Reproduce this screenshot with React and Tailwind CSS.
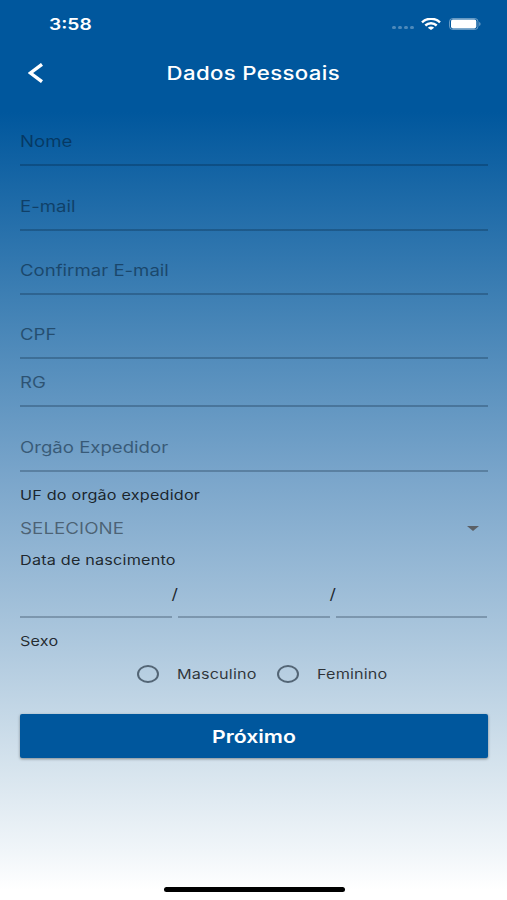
import React from "react";

function Label({ children, className = "" }) {
  return (
    <span className={`inline-block origin-left scale-x-[1.2] whitespace-nowrap ${className}`}>
      {children}
    </span>
  );
}

const lineStyle = "h-[2px] bg-[#001428]/25";

function Field({ label, className = "h-[64.3px]" }) {
  return (
    <div className={`flex flex-col justify-end ${className}`}>
      <Label className="mb-[12px] text-[15.5px] leading-5 text-[#001428]/50">{label}</Label>
      <div className={lineStyle} />
    </div>
  );
}

function StatusBar() {
  return (
    <div className="flex h-[47px] items-center justify-between pl-[49px] pr-[26px] text-white">
      <Label className="text-[16px] font-semibold leading-5">3:58</Label>
      <div className="flex items-center">
        <div className="mr-[7px] mt-[8px] flex gap-[2px]">
          {[0, 1, 2, 3].map((dot) => (
            <span key={dot} className="h-[3px] w-1 rounded-full bg-white/30" />
          ))}
        </div>
        <svg className="mr-2 h-3 w-5" viewBox="0 0 20 12" preserveAspectRatio="none" fill="none" stroke="white">
          <path d="M1 4.3C6-.4 14-.4 19 4.3" strokeWidth="2.4" />
          <path d="M4.3 7.5C7.5 4.5 12.5 4.5 15.7 7.5" strokeWidth="2.4" />
          <path d="M10 12 6.8 9.7C8.6 8.1 11.4 8.1 13.2 9.7Z" fill="white" stroke="none" />
        </svg>
        <svg className="h-3 w-8" viewBox="0 0 32 12" fill="none">
          <rect x=".5" y=".5" width="28.5" height="11" rx="3.2" stroke="white" strokeOpacity=".4" />
          <rect x="2" y="1.6" width="25.3" height="8.8" rx="1.8" fill="white" />
          <path d="M30.3 4v4c1.6-.7 1.6-3.3 0-4Z" fill="white" fillOpacity=".5" />
        </svg>
      </div>
    </div>
  );
}

function Radio({ label, width }) {
  return (
    <div className={`flex items-center ${width}`}>
      <span className="mr-[18px] h-[18px] w-[22px] shrink-0 rounded-[50%] border-2 border-[#536575]" />
      <Label className="text-[13.5px] leading-5 tracking-[0.12px] text-black/75">{label}</Label>
    </div>
  );
}

export default function App() {
  return (
    <div className="flex h-[900px] w-[507px] flex-col overflow-hidden bg-[linear-gradient(to_bottom,#00579d_0px,#00579d_112px,#3f80b4_300px,#7ba6cb_480px,#a9c5dc_630px,#d5e3ed_765px,#f0f5f9_850px,#ffffff_890px)] font-['Inter','Liberation_Sans',sans-serif]">
      <StatusBar />
      <header className="relative flex h-[55.2px] items-start justify-center pt-4 text-white">
        <svg className="absolute left-[28px] top-4 h-5 w-[15px]" viewBox="0 0 15 20" fill="none" stroke="white" strokeWidth="3.4">
          <path d="M14 1.3 2.4 10 14 18.7" />
        </svg>
        <h1 className="scale-x-[1.2] text-[18.5px] font-medium leading-5 tracking-[0.3px]">Dados Pessoais</h1>
      </header>

      <main className="flex flex-col pl-5 pr-[19.5px]">
        <Field label="Nome" />
        <Field label="E-mail" />
        <Field label="Confirmar E-mail" />
        <Field label="CPF" />
        <Field label="RG" className="h-12" />
        <Field label="Orgão Expedidor" />

        <div className="flex h-[47px] flex-col pt-[13px]">
          <Label className="text-[13.5px] leading-5 tracking-[0.16px] text-black/80">UF do orgão expedidor</Label>
        </div>
        <div className="flex h-5 items-center justify-between pr-[9px]">
          <Label className="text-[15.7px] leading-5 text-black/45">SELECIONE</Label>
          <svg className="h-[5px] w-3" viewBox="0 0 12 5" preserveAspectRatio="none" fill="#5b6066">
            <path d="M0 0h12L6 5Z" />
          </svg>
        </div>
        <div className="flex h-[33px] flex-col pt-[11px]">
          <Label className="text-[13.5px] leading-5 tracking-[0.16px] text-black/80">Data de nascimento</Label>
        </div>

        <div className="flex h-[46px] items-end">
          <div className={`flex-1 ${lineStyle}`} />
          <span className="w-[6px] scale-x-[1.2] pb-[14px] text-[15px] leading-5 text-black/80">/</span>
          <div className={`flex-1 ${lineStyle}`} />
          <span className="w-[6px] scale-x-[1.2] pb-[14px] text-[15px] leading-5 text-black/80">/</span>
          <div className={`flex-1 ${lineStyle}`} />
        </div>

        <div className="flex h-[34px] flex-col pt-[13px]">
          <Label className="text-[13.5px] leading-5 tracking-[0.16px] text-black/80">Sexo</Label>
        </div>
        <div className="flex h-[45px] items-center pl-[117px]">
          <Radio label="Masculino" width="w-[139.5px]" />
          <Radio label="Feminino" width="w-[120px]" />
        </div>

        <button className="mt-[17.5px] flex h-11 items-center justify-center rounded-[2px] bg-[#00579d] pt-px text-white shadow-[0_1px_3px_rgba(0,0,0,0.4)]">
          <span className="scale-x-[1.2] text-[17.7px] font-semibold leading-5">Próximo</span>
        </button>
      </main>

      <div className="mb-2 ml-[163.5px] mt-auto h-[5px] w-[181px] rounded-full bg-black" />
    </div>
  );
}
